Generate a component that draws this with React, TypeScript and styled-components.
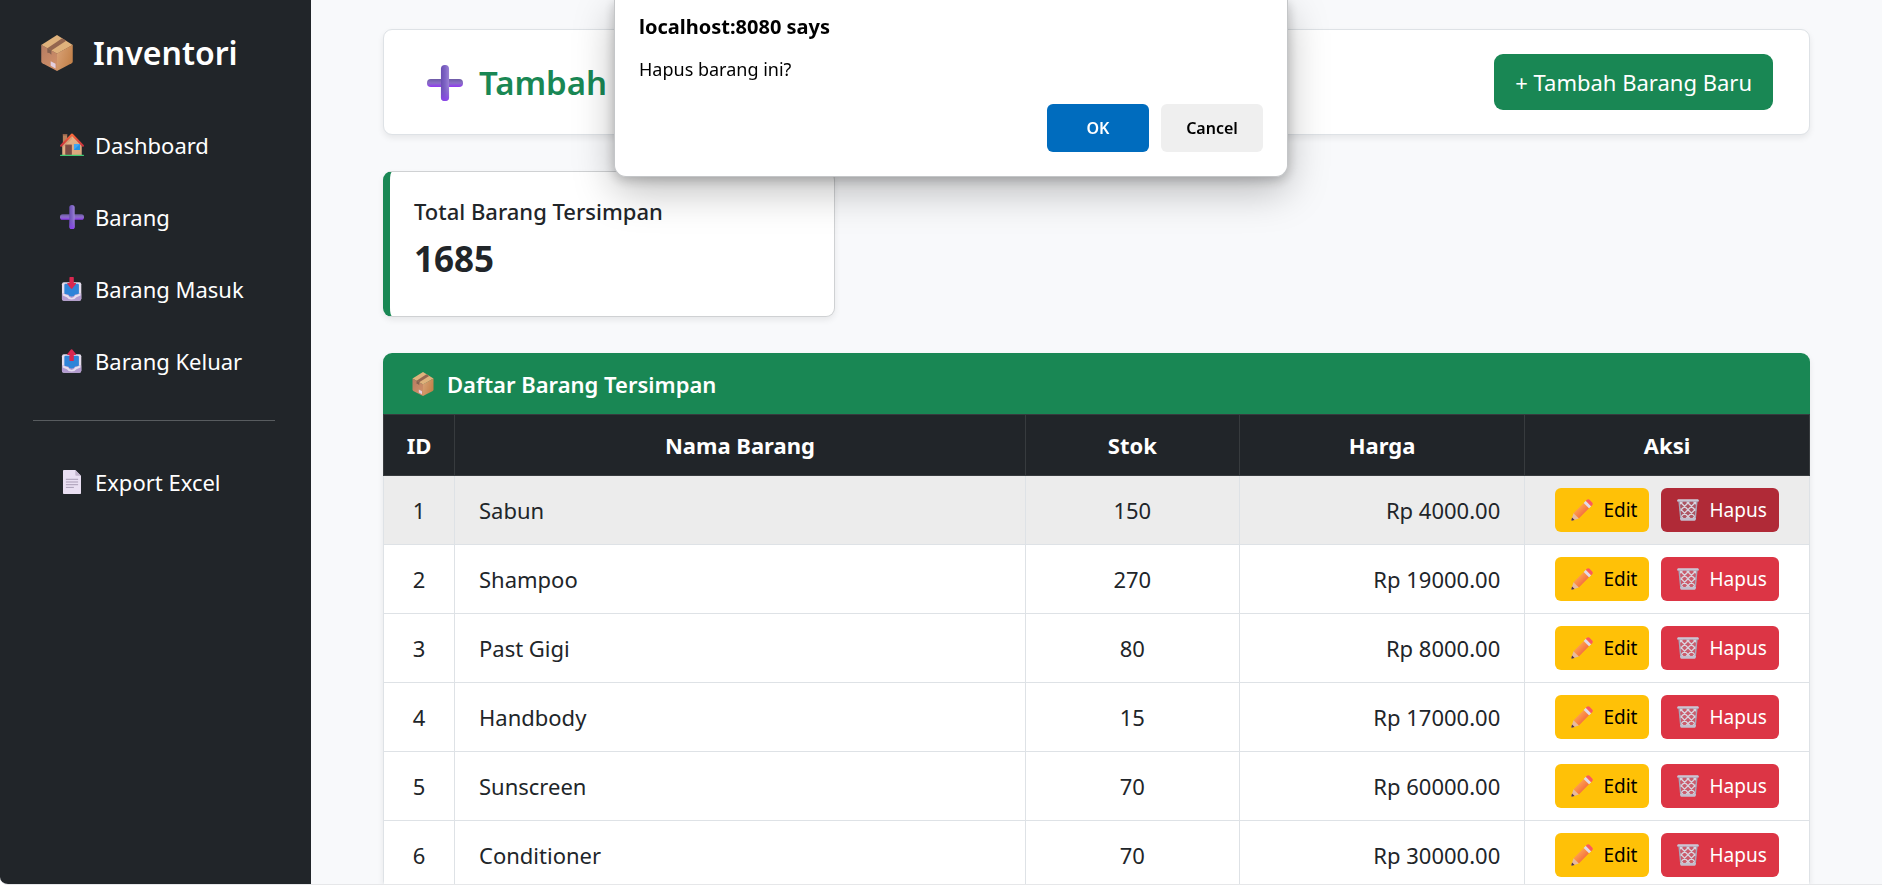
import React from 'react';
import styled, { createGlobalStyle, css } from 'styled-components';

const GlobalStyle = createGlobalStyle`
  *, *::before, *::after { box-sizing: border-box; }
  html, body, #root { height: 100%; }
  body {
    margin: 0;
    background: #ffffff;
    color: #212529;
    font-family: "Noto Sans", "Open Sans", "Liberation Sans", sans-serif;
    font-size: 22px;
    line-height: 36px;
  }
  h1, h2, h3, p, ul { margin: 0; padding: 0; }
`;

/* ---------- icons ---------- */

const Icon = styled.svg<{ $size: number }>`
  flex: none;
  display: block;
  width: ${({ $size }) => $size}px;
  height: ${({ $size }) => $size}px;
`;

type IconProps = { size?: number };

const PackageIcon = ({ size = 24 }: IconProps) => (
  <Icon $size={size} viewBox="0 0 32 32" aria-hidden="true">
    <defs>
      <linearGradient id="boxLeft" x1="0" y1="0" x2="0.6" y2="1">
        <stop offset="0" stopColor="#b57c62" />
        <stop offset="1" stopColor="#cf8f68" />
      </linearGradient>
      <linearGradient id="boxRight" x1="0" y1="0.3" x2="1" y2="0.8">
        <stop offset="0" stopColor="#d79f73" />
        <stop offset="1" stopColor="#c07e45" />
      </linearGradient>
    </defs>
    <path d="M16 0 L30 8.8 L16 16.6 L2 8.8 Z" fill="#dfb27c" />
    <path d="M2 8.6 L16 16.4 V32 L3 25.2 Q2 24.6 2 23.8 Z" fill="url(#boxLeft)" />
    <path d="M30 8.6 L16 16.4 V32 L29 25.2 Q30 24.6 30 23.8 Z" fill="url(#boxRight)" />
    <path d="M20.6 2.9 L24.2 5.2 L11 13.7 L7.4 11.8 Z" fill="#94664f" />
    <path d="M7.4 11.8 L11 13.7 V17.6 L9.2 16 L7.4 15.8 Z" fill="#85604f" />
    <path d="M10.4 23.4 L14.7 25.6 V29.7 L10.4 27.4 Z" fill="#e3cfe0" />
  </Icon>
);

const HouseIcon = ({ size = 24 }: IconProps) => (
  <Icon $size={size} viewBox="0 0 32 32" aria-hidden="true">
    <defs>
      <linearGradient id="houseWall" x1="0" y1="0" x2="1" y2="1">
        <stop offset="0" stopColor="#e9b489" />
        <stop offset="1" stopColor="#d9a57c" />
      </linearGradient>
      <linearGradient id="houseRoof" x1="0" y1="0" x2="0" y2="1">
        <stop offset="0" stopColor="#fb6a3a" />
        <stop offset="1" stopColor="#c92f3b" />
      </linearGradient>
    </defs>
    <rect x="3.8" y="1.6" width="5.8" height="13" fill="#b9815c" />
    <rect x="3.8" y="1.6" width="5.8" height="1.6" fill="#8f5f49" />
    <path d="M16 3 L29 16 V29.4 H3 V16 Z" fill="url(#houseWall)" />
    <path d="M3 16 L16 3 L16 8 L3 20 Z" fill="#c48f6c" opacity="0.5" />
    <rect x="6.8" y="15.2" width="9.2" height="14" rx="0.8" fill="#8d5a4e" />
    <rect x="8" y="16.4" width="6.8" height="12.8" fill="#7c4b43" />
    <rect x="18.6" y="14.8" width="8" height="8" rx="0.5" fill="#3ea6f2" />
    <path d="M18.6 22.8 L26.6 14.8 V22.8 Z" fill="#2292e4" />
    <path d="M1.4 17 L16 2 L30.6 17" fill="none" stroke="url(#houseRoof)" strokeWidth="2.8" strokeLinecap="round" strokeLinejoin="round" />
    <rect x="0" y="28.9" width="32" height="1.9" rx="0.9" fill="#3fca73" />
  </Icon>
);

const PlusIcon = ({ size = 24 }: IconProps) => (
  <Icon $size={size} viewBox="0 0 32 32" aria-hidden="true">
    <defs>
      <linearGradient id="plusH" x1="0" y1="0" x2="0" y2="1">
        <stop offset="0" stopColor="#6d5ba6" />
        <stop offset="0.5" stopColor="#8a70c4" />
        <stop offset="1" stopColor="#9038f2" />
      </linearGradient>
      <linearGradient id="plusV" x1="0" y1="0" x2="1" y2="0">
        <stop offset="0" stopColor="#6a4fb2" />
        <stop offset="0.5" stopColor="#7d63c4" />
        <stop offset="1" stopColor="#9c83d6" />
      </linearGradient>
      <linearGradient id="plusFoot" x1="0" y1="0" x2="0" y2="1">
        <stop offset="0.6" stopColor="#7a4fd0" stopOpacity="0" />
        <stop offset="1" stopColor="#8d3ff0" stopOpacity="0.9" />
      </linearGradient>
    </defs>
    <rect x="0" y="12.4" width="32" height="7.2" rx="3.4" fill="url(#plusH)" />
    <rect x="12.4" y="0" width="7.2" height="32" rx="3.4" fill="url(#plusV)" />
    <rect x="12.4" y="0" width="7.2" height="32" rx="3.4" fill="url(#plusFoot)" />
  </Icon>
);

const Tray = () => (
  <>
    <rect x="2.6" y="7" width="25.8" height="24.6" rx="2.6" fill="#e4dcec" />
    <path d="M2.6 22 H28.4 V29 Q28.4 31.6 25.8 31.6 H5.2 Q2.6 31.6 2.6 29 Z" fill="#b39bd0" />
    <path d="M3.6 22 L11 24.4 Q12 28 15.5 28 Q19 28 20 24.4 L27.4 22 V24.8 L21.8 27 Q20 30 15.5 30 Q11 30 9.2 27 L3.6 24.8 Z" fill="#e6deee" />
    <path d="M7.4 9 H23.6 Q25.2 9 25.2 10.8 V21.6 Q25.2 22.6 24 22.8 L20 23.4 Q19 26 15.5 26 Q12 26 11 23.4 L7 22.8 Q5.8 22.6 5.8 21.6 V10.8 Q5.8 9 7.4 9 Z" fill="#2f84d8" />
  </>
);

const InboxIcon = ({ size = 24 }: IconProps) => (
  <Icon $size={size} viewBox="0 0 32 32" aria-hidden="true">
    <Tray />
    <path d="M12.6 0.6 Q12.6 0 13.2 0 H17.8 Q18.4 0 18.4 0.6 V8 H20.6 Q22 8 21.2 9.4 L16.4 15.4 Q15.5 16.4 14.6 15.4 L9.8 9.4 Q9 8 10.4 8 H12.6 Z" fill="#d9274f" />
  </Icon>
);

const OutboxIcon = ({ size = 24 }: IconProps) => (
  <Icon $size={size} viewBox="0 0 32 32" aria-hidden="true">
    <Tray />
    <path d="M12.6 15.4 Q12.6 16 13.2 16 H17.8 Q18.4 16 18.4 15.4 V8 H20.6 Q22 8 21.2 6.6 L16.4 0.8 Q15.5 -0.2 14.6 0.8 L9.8 6.6 Q9 8 10.4 8 H12.6 Z" fill="#d9274f" />
  </Icon>
);

const PageIcon = ({ size = 24 }: IconProps) => (
  <Icon $size={size} viewBox="0 0 32 32" aria-hidden="true">
    <path d="M5 0 H20.4 L28 7.6 V31 Q28 32 27 32 H5 Q4 32 4 31 V1 Q4 0 5 0 Z" fill="#e9dff2" />
    <path d="M20.4 0 L28 7.6 H21.6 Q20.4 7.6 20.4 6.4 Z" fill="#c1b4cc" />
    <path d="M8.4 12.4 H23.6 M8.4 16 H23.6 M8.4 19.6 H23.6 M8.4 23.2 H18" stroke="#a79bb4" strokeWidth="1.3" strokeLinecap="round" />
  </Icon>
);

const PencilIcon = ({ size = 22 }: IconProps) => (
  <Icon $size={size} viewBox="0 0 32 32" aria-hidden="true">
    <defs>
      <linearGradient id="pencilBody" x1="0" y1="0" x2="1" y2="1">
        <stop offset="0.3" stopColor="#ffa04d" />
        <stop offset="0.75" stopColor="#f3693f" />
      </linearGradient>
    </defs>
    <path d="M3.6 20.6 L18.4 5.8 L26.2 13.6 L11.4 28.4 Z" fill="url(#pencilBody)" />
    <path d="M3.6 20.6 L11.4 28.4 L2 31.4 Q0.2 31.8 0.6 30 Z" fill="#e8b9a0" />
    <path d="M1.6 26.8 L5.2 30.4 L2 31.4 Q0.2 31.8 0.6 30 Z" fill="#4a3145" />
    <path d="M18.4 5.8 L21.6 2.6 L29.4 10.4 L26.2 13.6 Z" fill="#e2d9ec" />
    <path d="M21.6 2.6 L23 1.2 Q25 -0.6 27 1.2 L30.8 5 Q32.6 7 30.8 9 L29.4 10.4 Z" fill="#fb5a5e" />
  </Icon>
);

const BinIcon = ({ size = 22 }: IconProps) => (
  <Icon $size={size} viewBox="0 0 32 32" aria-hidden="true">
    <path d="M2.6 3.4 H29.4 L26.4 29 H5.6 Z" fill="#a9a3b4" fillOpacity="0.35" />
    <path
      d="M3.6 8 L8 3.6 M4.6 17 L18 3.6 M5.6 26 L28 3.6 M12 29.6 L27.6 14 M22 29.6 L26.6 25 M28.4 8 L24 3.6 M27.4 17 L14 3.6 M26.4 26 L4 3.6 M20 29.6 L4.4 14 M10 29.6 L5.4 25"
      stroke="#d9d5df"
      strokeWidth="2"
      fill="none"
    />
    <path d="M3 3 L5.6 29.6 M29 3 L26.4 29.6" stroke="#aaa4b6" strokeWidth="2" />
    <rect x="0" y="0.6" width="32" height="3.4" rx="1.6" fill="#b8b2c4" />
    <rect x="1" y="0.8" width="30" height="1.4" rx="0.7" fill="#dcd8e2" />
    <path d="M4.4 27.8 H27.6 L27 30.4 Q26.7 31.6 25.6 31.6 H6.4 Q5.3 31.6 5 30.4 Z" fill="#c4bfce" />
  </Icon>
);

/* ---------- page shell ---------- */

const Shell = styled.div`
  position: relative;
  display: flex;
  height: 100vh;
  overflow: hidden;
  border-bottom: 1px solid #e6e7e9;
  border-bottom-left-radius: 8px;
`;

const Sidebar = styled.nav`
  flex: 0 0 311px;
  padding: 24px 36px 24px 33px;
  background: #212529;
  color: #ffffff;
`;

const Brand = styled.div`
  display: flex;
  align-items: center;
  gap: 18px;
  height: 57px;
  margin-bottom: 28px;
  padding-left: 6px;
  font-size: 32px;
  font-weight: 600;
`;

const NavList = styled.ul`
  list-style: none;
`;

const NavLink = styled.a`
  display: flex;
  align-items: center;
  gap: 11px;
  height: 72px;
  padding-left: 27px;
  color: inherit;
  text-decoration: none;
`;

const Divider = styled.hr`
  height: 1px;
  margin: 23px 0 25px;
  border: 0;
  background: #585c5f;
`;

const Main = styled.main`
  flex: 1;
  min-width: 0;
  padding: 29px 72px 72px;
  overflow-y: auto;
  scrollbar-width: none;
  background: #f8f9fb;
`;

/* ---------- cards ---------- */

const cardSurface = css`
  border-radius: 9px;
  background: #ffffff;
  box-shadow: 0 3px 6px rgba(0, 0, 0, 0.075);
`;

const HeaderCard = styled.header`
  ${cardSurface}
  display: flex;
  align-items: center;
  justify-content: space-between;
  height: 106px;
  margin-bottom: 36px;
  padding: 0 36px 0 43px;
  border: 1px solid #dee2e6;
`;

const PageTitle = styled.h1`
  display: flex;
  align-items: center;
  gap: 16px;
  padding-top: 2px;
  color: #198754;
  font-size: 33px;
  font-weight: 600;
`;

const AddButton = styled.button`
  height: 56px;
  padding: 0 21px;
  border: 0;
  border-radius: 9px;
  background: #198754;
  color: #ffffff;
  font: inherit;
`;

const StatGrid = styled.section`
  display: grid;
  grid-template-columns: repeat(3, 1fr);
  gap: 36px;
  margin-bottom: 36px;
`;

const StatCard = styled.article`
  ${cardSurface}
  padding: 24px 24px 32px;
  border: 1px solid #cfd1d3;
  border-left: 7px solid #198754;
`;

const StatLabel = styled.h2`
  margin-bottom: 8px;
  font-size: 22px;
  font-weight: 500;
  line-height: 30px;
`;

const StatValue = styled.p`
  font-size: 35px;
  font-weight: 700;
  line-height: 50px;
`;

const TableCard = styled.section`
  ${cardSurface}
  overflow: hidden;
`;

const TableTitle = styled.h2`
  display: flex;
  align-items: center;
  gap: 12px;
  height: 61px;
  padding: 0 28px;
  background: #198754;
  color: #ffffff;
  font-size: 22px;
  font-weight: 600;
`;

/* ---------- table ---------- */

type Align = 'left' | 'center' | 'right';

const Table = styled.table`
  width: 100%;
  table-layout: fixed;
  border-collapse: separate;
  border-spacing: 0;
`;

const Col = styled.col<{ $width: string }>`
  width: ${({ $width }) => $width};
`;

const HeadCell = styled.th`
  height: 62px;
  padding: 0;
  border: 1px solid #373b3e;
  border-left-width: 0;
  background: #212529;
  color: #ffffff;
  font-weight: 700;
  text-align: center;

  &:first-child { border-left-width: 1px; }
`;

const Cell = styled.td<{ $align: Align }>`
  height: 69px;
  padding: 0 ${({ $align }) => ($align === 'center' ? 0 : 24)}px;
  border: 1px solid #dee2e6;
  border-width: 0 1px 1px 0;
  text-align: ${({ $align }) => $align};

  &:first-child { border-left-width: 1px; }
`;

const Row = styled.tr<{ $active: boolean }>`
  background: ${({ $active }) => ($active ? '#ececec' : '#ffffff')};
`;

const Actions = styled.div`
  display: flex;
  justify-content: center;
  gap: 12px;
`;

const tones = {
  edit: { background: '#ffc107', color: '#000000' },
  remove: { background: '#dc3545', color: '#ffffff' },
  removePressed: { background: '#b02a37', color: '#ffffff' },
};

const ActionButton = styled.button<{ $tone: keyof typeof tones }>`
  display: flex;
  align-items: center;
  gap: 10px;
  height: 44px;
  padding: 0 12px 0 16px;
  border: 0;
  border-radius: 6px;
  background: ${({ $tone }) => tones[$tone].background};
  color: ${({ $tone }) => tones[$tone].color};
  font: inherit;
  font-size: 19px;
`;

/* ---------- confirm dialog ---------- */

const DialogLayer = styled.div`
  position: absolute;
  inset: 0;
  display: flex;
  align-items: flex-start;
  justify-content: center;
  padding-left: 20px;
`;

const Dialog = styled.div`
  width: 674px;
  padding: 9px 24px 24px;
  border: solid #c4c6c8;
  border-width: 0 1px 1px;
  border-radius: 0 0 12px 12px;
  background: #ffffff;
  color: #000000;
  box-shadow: 0 14px 40px rgba(0, 0, 0, 0.26), 0 3px 12px rgba(0, 0, 0, 0.22);
`;

const DialogTitle = styled.h2`
  margin-bottom: 6px;
  font-size: 20px;
  font-weight: 700;
`;

const DialogText = styled.p`
  margin-bottom: 17px;
  font-size: 18px;
`;

const DialogActions = styled.div`
  display: flex;
  justify-content: flex-end;
  gap: 12px;
`;

const DialogButton = styled.button<{ $primary?: boolean }>`
  width: 102px;
  height: 48px;
  border: 0;
  border-radius: 6px;
  background: ${({ $primary }) => ($primary ? '#006cbe' : '#efefef')};
  color: ${({ $primary }) => ($primary ? '#ffffff' : '#000000')};
  font: inherit;
  font-size: 16px;
  font-weight: 600;
`;

/* ---------- data ---------- */

const links = [
  { label: 'Dashboard', icon: HouseIcon },
  { label: 'Barang', icon: PlusIcon },
  { label: 'Barang Masuk', icon: InboxIcon },
  { label: 'Barang Keluar', icon: OutboxIcon },
];

const columns = [
  { label: 'ID', width: '72px' },
  { label: 'Nama Barang', width: '40%' },
  { label: 'Stok', width: '15%' },
  { label: 'Harga', width: '20%' },
  { label: 'Aksi', width: 'auto' },
];

const items = [
  { id: 1, name: 'Sabun', stock: 150, price: 4000 },
  { id: 2, name: 'Shampoo', stock: 270, price: 19000 },
  { id: 3, name: 'Past Gigi', stock: 80, price: 8000 },
  { id: 4, name: 'Handbody', stock: 15, price: 17000 },
  { id: 5, name: 'Sunscreen', stock: 70, price: 60000 },
  { id: 6, name: 'Conditioner', stock: 70, price: 30000 },
];

const pendingId = 1;

export default function App() {
  return (
    <>
      <GlobalStyle />
      <Shell>
        <Sidebar>
          <Brand>
            <PackageIcon size={36} />
            Inventori
          </Brand>
          <NavList>
            {links.map(({ label, icon: LinkIcon }) => (
              <li key={label}>
                <NavLink href="#">
                  <LinkIcon />
                  {label}
                </NavLink>
              </li>
            ))}
          </NavList>
          <Divider />
          <NavLink href="#">
            <PageIcon />
            Export Excel
          </NavLink>
        </Sidebar>

        <Main>
          <HeaderCard>
            <PageTitle>
              <PlusIcon size={36} />
              Tambah
            </PageTitle>
            <AddButton type="button">+ Tambah Barang Baru</AddButton>
          </HeaderCard>

          <StatGrid>
            <StatCard>
              <StatLabel>Total Barang Tersimpan</StatLabel>
              <StatValue>1685</StatValue>
            </StatCard>
          </StatGrid>

          <TableCard>
            <TableTitle>
              <PackageIcon />
              Daftar Barang Tersimpan
            </TableTitle>
            <Table>
              <colgroup>
                {columns.map((c) => (
                  <Col key={c.label} $width={c.width} />
                ))}
              </colgroup>
              <thead>
                <tr>
                  {columns.map((c) => (
                    <HeadCell key={c.label} scope="col">{c.label}</HeadCell>
                  ))}
                </tr>
              </thead>
              <tbody>
                {items.map((item) => (
                  <Row key={item.id} $active={item.id === pendingId}>
                    <Cell $align="center">{item.id}</Cell>
                    <Cell $align="left">{item.name}</Cell>
                    <Cell $align="center">{item.stock}</Cell>
                    <Cell $align="right">Rp {item.price.toFixed(2)}</Cell>
                    <Cell $align="center">
                      <Actions>
                        <ActionButton type="button" $tone="edit">
                          <PencilIcon />
                          Edit
                        </ActionButton>
                        <ActionButton type="button" $tone={item.id === pendingId ? 'removePressed' : 'remove'}>
                          <BinIcon />
                          Hapus
                        </ActionButton>
                      </Actions>
                    </Cell>
                  </Row>
                ))}
              </tbody>
            </Table>
          </TableCard>
        </Main>

        <DialogLayer>
          <Dialog role="alertdialog" aria-modal="true" aria-labelledby="confirm-title" aria-describedby="confirm-text">
            <DialogTitle id="confirm-title">localhost:8080 says</DialogTitle>
            <DialogText id="confirm-text">Hapus barang ini?</DialogText>
            <DialogActions>
              <DialogButton type="button" $primary>OK</DialogButton>
              <DialogButton type="button">Cancel</DialogButton>
            </DialogActions>
          </Dialog>
        </DialogLayer>
      </Shell>
    </>
  );
}
